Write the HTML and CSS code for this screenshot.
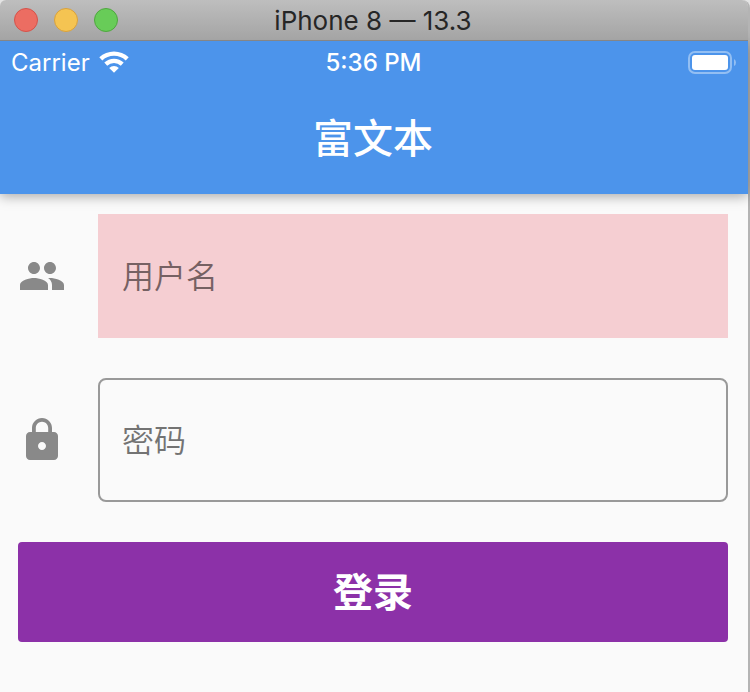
FILE: index.html
```html
<!DOCTYPE html>
<html lang="zh-CN">
<head>
<meta charset="utf-8">
<meta name="viewport" content="width=device-width, initial-scale=1">
<title>富文本</title>
<link rel="stylesheet" href="styles.css">
</head>
<body>
<div class="window">
  <div class="titlebar">
    <div class="lights">
      <span class="light light-close"></span>
      <span class="light light-minimize"></span>
      <span class="light light-zoom"></span>
    </div>
    <span class="window-title">iPhone 8 — 13.3</span>
  </div>
  <header class="appbar">
    <div class="status">
      <div class="carrier">
        <span>Carrier</span>
        <svg class="wifi" viewBox="0 0 30 22" aria-hidden="true">
          <path d="M.3 6.300A21.500 21.500 0 0 1 29.700 6.300L26.700 9.400A17.200 17.200 0 0 0 3.300 9.400Z"/>
          <path d="M5.300 11.600A14.200 14.200 0 0 1 24.700 11.600L21.800 14.700A10 10 0 0 0 8.200 14.700Z"/>
          <path d="M10.200 16.900A7 7 0 0 1 19.800 16.900L15 21.800Z"/>
        </svg>
      </div>
      <span class="time">5:36 PM</span>
      <svg class="battery" viewBox="0 0 48 23" aria-hidden="true">
        <rect class="battery-shell" x="1" y="1" width="42" height="21" rx="6"/>
        <rect x="4" y="4" width="36" height="15" rx="3"/>
        <path class="battery-cap" d="M46 8Q48 9 48 11.500Q48 14 46 15Z"/>
      </svg>
    </div>
    <h1 class="page-title">富文本</h1>
  </header>
  <form class="login">
    <div class="row">
      <label for="username" aria-label="用户名">
        <svg class="icon" viewBox="0 0 24 24" aria-hidden="true"><path d="M16 11c1.660 0 2.990-1.340 2.990-3S17.660 5 16 5c-1.660 0-3 1.340-3 3s1.340 3 3 3zm-8 0c1.660 0 2.990-1.340 2.990-3S9.660 5 8 5C6.340 5 5 6.340 5 8s1.340 3 3 3zm0 2c-2.330 0-7 1.170-7 3.500V19h14v-2.500c0-2.330-4.670-3.500-7-3.500zm8 0c-.29 0-.62.02-.97.05 1.160.84 1.970 1.970 1.970 3.450V19h6v-2.500c0-2.330-4.670-3.500-7-3.500z"/></svg>
      </label>
      <input class="field field-filled" id="username" type="text" placeholder="用户名">
    </div>
    <div class="row">
      <label for="password" aria-label="密码">
        <svg class="icon" viewBox="0 0 24 24" aria-hidden="true"><path d="M18 8h-1V6c0-2.760-2.240-5-5-5S7 3.240 7 6v2H6c-1.100 0-2 .9-2 2v10c0 1.100.9 2 2 2h12c1.100 0 2-.9 2-2V10c0-1.100-.9-2-2-2zm-6 9c-1.100 0-2-.9-2-2s.9-2 2-2 2 .9 2 2-.9 2-2 2zm3.100-9H8.900V6c0-1.710 1.390-3.100 3.100-3.100 1.710 0 3.100 1.390 3.100 3.100v2z"/></svg>
      </label>
      <input class="field field-outlined" id="password" type="password" placeholder="密码">
    </div>
    <button class="submit" type="button">登录</button>
  </form>
</div>
</body>
</html>
```
FILE: styles.css
```css
* {
  box-sizing: border-box;
}

body {
  margin: 0;
  background: #e4e4e4;
  font-family: Inter, "Noto Sans CJK SC", sans-serif;
}

.window {
  min-height: 100vh;
  border-right: 2px solid #b4b4b4;
  border-radius: 8px 8px 0 0;
  background: #fafafa;
}

.titlebar {
  position: relative;
  z-index: 1;
  display: grid;
  grid-template-columns: 1fr auto 1fr;
  align-items: center;
  height: 41px;
  padding: 0 16px 0 14px;
  border-bottom: 1px solid #858585;
  border-radius: 6px 6px 0 0;
  background: linear-gradient(#bebebe, #a4a4a4);
}

.lights {
  display: flex;
  gap: 16px;
}

.light {
  width: 24px;
  height: 24px;
  border: 1px solid;
  border-radius: 50%;
}

.light-close {
  border-color: #d5524a;
  background: #ec6d62;
}

.light-minimize {
  border-color: #d9a13c;
  background: #f5c452;
}

.light-zoom {
  border-color: #4fa73f;
  background: #68cc58;
}

.window-title {
  padding-top: 2px;
  color: #262626;
  font-size: 26px;
  line-height: 38px;
}

.appbar {
  position: relative;
  height: 153px;
  background: #4c94eb;
  box-shadow: 0 2px 12px rgba(0, 0, 0, 0.35);
  color: #fff;
}

.status {
  display: grid;
  grid-template-columns: 1fr auto 1fr;
  align-items: center;
  height: 42px;
  padding: 0 12px 0 11px;
  font-size: 24px;
}

.carrier {
  display: flex;
  align-items: center;
  gap: 9px;
}

.wifi {
  width: 30px;
  height: 22px;
  fill: #fff;
}

.time {
  font-weight: 500;
}

.battery {
  justify-self: end;
  width: 48px;
  height: 23px;
  fill: #fff;
}

.battery-shell {
  fill: none;
  stroke: #93bff3;
  stroke-width: 2;
}

.battery-cap {
  fill: #93bff3;
}

.page-title {
  margin: 0;
  padding-right: 2px;
  font-size: 40px;
  font-weight: 500;
  line-height: 111px;
  text-align: center;
}

.login {
  display: flex;
  flex-direction: column;
  gap: 40px;
  padding: 20px 20px 50px 18px;
}

.row {
  display: flex;
  align-items: center;
  gap: 32px;
}

.icon {
  display: block;
  width: 48px;
  height: 48px;
  fill: #898989;
}

.field {
  flex: 1;
  min-width: 0;
  height: 124px;
  padding: 0 22px;
  border: 2px solid transparent;
  outline: none;
  color: #222;
  font-family: inherit;
  font-size: 32px;
  font-weight: 350;
}

.field::placeholder {
  color: #737373;
  opacity: 1;
}

.field-filled {
  border-color: #f5ced2;
  background: #f5ced2;
}

.field-filled::placeholder {
  color: #766163;
}

.field-outlined {
  border-color: #999;
  border-radius: 8px;
  background: transparent;
}

.submit {
  height: 100px;
  padding: 0 0 4px;
  border: 0;
  border-radius: 4px;
  background: #8c31a8;
  color: #fff;
  font-family: inherit;
  font-size: 40px;
  font-weight: 700;
}
```
